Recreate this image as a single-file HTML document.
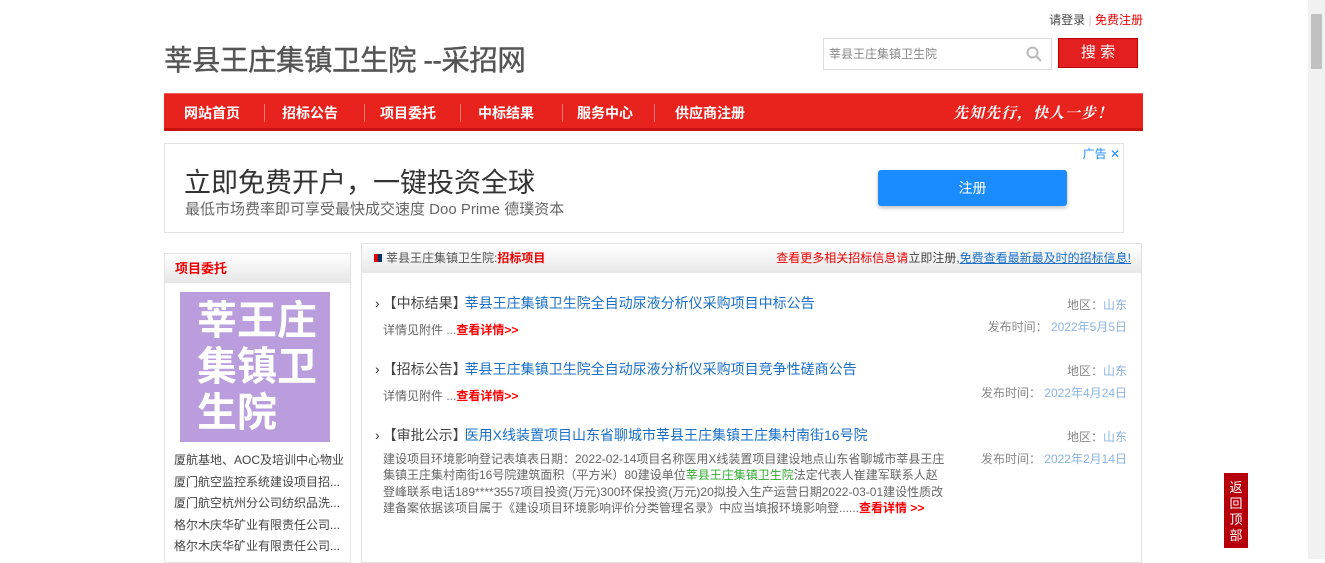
<!DOCTYPE html>
<html><head><meta charset="utf-8"><style>
*{margin:0;padding:0;box-sizing:border-box}
body{width:1325px;height:559px;overflow:hidden;background:#fff;font-family:"Liberation Sans","Noto Sans CJK SC",sans-serif;font-size:12px;color:#666;position:relative}
.a{position:absolute}
.sb{right:0;top:0;width:17px;height:559px;background:#f1f1f1}
.nav a{color:#fff;font-weight:bold;font-size:14px;position:absolute;top:9px}
.sep{position:absolute;top:10px;width:1px;height:18px;background:#f77}
.it{position:absolute;left:375px;width:752px}
.t{font-size:14px;color:#333}
.t i{font-style:normal;margin-left:3px;color:#444}
.t b{font-weight:normal;color:#1a6fc7;margin-left:-2px}
.r{position:absolute;right:0;color:#888;text-align:right}
.r span{color:#8ab4e0}
.red{color:#f00;font-weight:bold}
.sl div{height:21.5px;line-height:21.5px;font-size:12px;color:#444;white-space:nowrap;overflow:hidden;width:170px}
</style></head><body>
<div class="a sb"><div style="position:absolute;top:14px;left:3px;width:11px;height:55px;background:#c1c1c1"></div></div>
<div class="a" style="right:182px;top:11px;font-size:12px;color:#444">请登录 <span style="color:#ccc">|</span> <span style="color:#e00">免费注册</span></div>
<div class="a" style="left:164px;top:38px;font-size:28.5px;color:#555;letter-spacing:-0.5px;-webkit-text-stroke:0.4px #555">莘县王庄集镇卫生院 --采招网</div>
<div class="a" style="left:823px;top:38px;width:229px;height:32px;border:1px solid #ddd;font-size:12px;color:#888;line-height:30px;padding-left:5px">莘县王庄集镇卫生院
<svg style="position:absolute;right:9px;top:7px" width="16" height="16"><circle cx="6.5" cy="6.5" r="5" stroke="#bbb" stroke-width="2" fill="none"/><line x1="10" y1="10" x2="15" y2="15" stroke="#bbb" stroke-width="2"/></svg></div>
<div class="a" style="left:1058px;top:38px;width:80px;height:30px;background:#e41f1f;border:1px solid #b00;color:#fff;font-size:15px;text-align:center;line-height:28px">搜 索</div>
<div class="a nav" style="left:164px;top:93px;width:979px;height:38px;background:#e8221c;border-bottom:3px solid #c8120e;border-top:1px solid #f06060">
<a style="left:20px">网站首页</a><span class="sep" style="left:100px"></span>
<a style="left:118px">招标公告</a><span class="sep" style="left:200px"></span>
<a style="left:216px">项目委托</a><span class="sep" style="left:296px"></span>
<a style="left:314px">中标结果</a><span class="sep" style="left:398px"></span>
<a style="left:413px">服务中心</a><span class="sep" style="left:490px"></span>
<a style="left:511px">供应商注册</a>
<span style="position:absolute;right:30px;top:8px;color:#fff;font-style:italic;font-weight:bold;font-size:15px;font-family:'Noto Serif CJK SC',serif;letter-spacing:1px">先知先行，快人一步！</span>
</div>
<div class="a" style="left:164px;top:143px;width:960px;height:90px;border:1px solid #e3e3e3">
<div class="a" style="left:19px;top:17px;font-size:27px;color:#333">立即免费开户，一键投资全球</div>
<div class="a" style="left:20px;top:54px;font-size:15px;color:#666">最低市场费率即可享受最快成交速度 Doo Prime 德璞资本</div>
<div class="a" style="left:713px;top:26px;width:189px;height:36px;background:#1a8cff;border-radius:3px;color:#fff;font-size:14px;text-align:center;line-height:36px;box-shadow:0 2px 4px rgba(0,0,0,.25)">注册</div>
<div class="a" style="right:3px;top:1px;font-size:12px;color:#1a8cff">广告 ✕</div>
</div>
<div class="a" style="left:164px;top:253px;width:187px;height:310px;border:1px solid #e3e3e3">
<div style="height:29px;background:linear-gradient(#fff,#e6e6e6);color:#e00;font-weight:bold;font-size:13px;line-height:29px;padding-left:10px">项目委托</div>
<div class="a" style="left:15px;top:38px;width:150px;height:150px;background:#b99ddc;color:#fff;font-size:40px;font-weight:bold;line-height:46px;padding:6px 0 0 17px">莘王庄<br>集镇卫<br>生院</div>
<div class="a sl" style="left:9px;top:196px">
<div>厦航基地、AOC及培训中心物业</div><div>厦门航空监控系统建设项目招...</div><div>厦门航空杭州分公司纺织品洗...</div><div>格尔木庆华矿业有限责任公司...</div><div>格尔木庆华矿业有限责任公司...</div></div>
</div>
<div class="a" style="left:361px;top:243px;width:781px;height:320px;border:1px solid #e0e0e0">
<div style="height:29px;background:linear-gradient(#fff,#e8e8e8);line-height:29px;font-size:12px;padding-left:12px;color:#555">
<span style="display:inline-block;width:8px;height:8px;background:linear-gradient(90deg,#d00 50%,#036 50%);margin-right:4px"></span>莘县王庄集镇卫生院:<b style="color:#e00">招标项目</b>
<span style="position:absolute;right:10px;color:#e00">查看更多相关招标信息请<span style="color:#444">立即注册,</span><u style="color:#1a6fc7">免费查看最新最及时的招标信息!</u></span></div>
</div>
<div class="it" style="top:293px"><div class="t">›<i>【中标结果】</i><b>莘县王庄集镇卫生院全自动尿液分析仪采购项目中标公告</b></div>
<div style="margin:8px 0 0 8px">详情见附件 ...<span class="red">查看详情&gt;&gt;</span></div>
<div class="r" style="top:3px">地区：<span>山东</span></div><div class="r" style="top:25px">发布时间： <span>2022年5月5日</span></div></div>
<div class="it" style="top:359px"><div class="t">›<i>【招标公告】</i><b>莘县王庄集镇卫生院全自动尿液分析仪采购项目竞争性磋商公告</b></div>
<div style="margin:8px 0 0 8px">详情见附件 ...<span class="red">查看详情&gt;&gt;</span></div>
<div class="r" style="top:3px">地区：<span>山东</span></div><div class="r" style="top:25px">发布时间： <span>2022年4月24日</span></div></div>
<div class="it" style="top:425px"><div class="t">›<i>【审批公示】</i><b>医用X线装置项目山东省聊城市莘县王庄集镇王庄集村南街16号院</b></div>
<div style="margin:6px 0 0 8px;width:562px;line-height:16.3px">建设项目环境影响登记表填表日期：2022-02-14项目名称医用X线装置项目建设地点山东省聊城市莘县王庄集镇王庄集村南街16号院建筑面积（平方米）80建设单位<span style="color:#3a3">莘县王庄集镇卫生院</span>法定代表人崔建军联系人赵登峰联系电话189****3557项目投资(万元)300环保投资(万元)20拟投入生产运营日期2022-03-01建设性质改建备案依据该项目属于《建设项目环境影响评价分类管理名录》中应当填报环境影响登......<span class="red">查看详情 &gt;&gt;</span></div>
<div class="r" style="top:3px">地区：<span>山东</span></div><div class="r" style="top:25px">发布时间： <span>2022年2月14日</span></div></div>
<div class="a" style="left:1224px;top:473px;width:24px;height:75px;background:#b5000c;color:#fff;font-size:13px;line-height:16px;text-align:center;padding-top:7px">返<br>回<br>顶<br>部</div>
</body></html>
